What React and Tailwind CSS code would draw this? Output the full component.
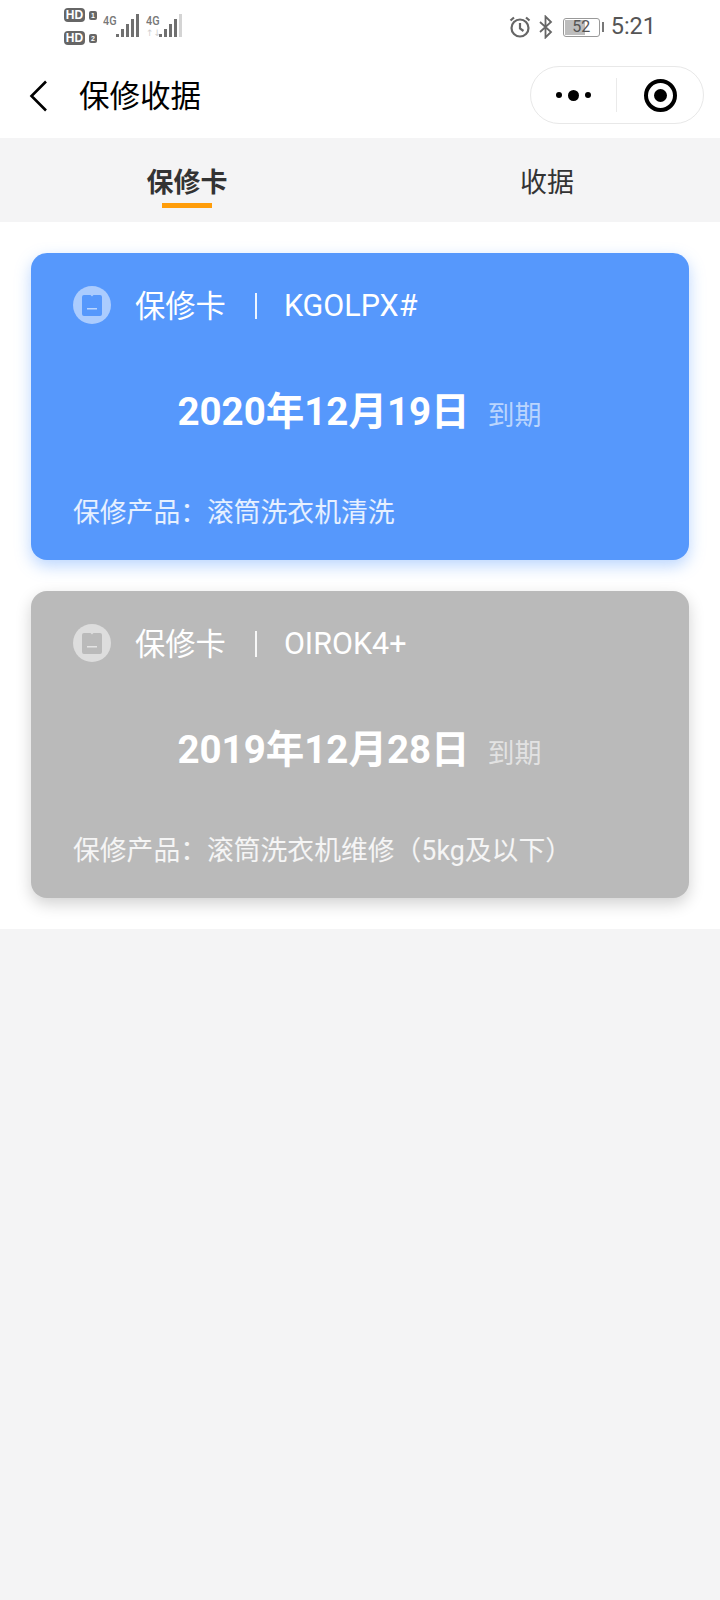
import React from 'react';

const cjk = "font-['Roboto','Noto_Sans_CJK_SC',sans-serif]";

const cards = [
  { code: 'KGOLPX#', date: '2020年12月19日', product: '滚筒洗衣机清洗', bg: 'bg-[#5698fc]', shadow: 'shadow-[0_6px_16px_rgba(86,152,252,0.4)]', icon: 'text-[#5698fc]' },
  { code: 'OIROK4+', date: '2019年12月28日', product: '滚筒洗衣机维修（5kg及以下）', bg: 'bg-[#bababa]', shadow: 'shadow-[0_6px_16px_rgba(0,0,0,0.18)]', icon: 'text-[#bababa]' },
];

function Signal({ dim }) {
  const heights = [3, 8, 13, 18, 23];
  return (
    <div className="flex items-end gap-[2px] h-[23px]">
      {heights.map((h, i) => (
        <div
          key={i}
          className={`w-[3px] ${dim && i === 4 ? 'bg-[#d4d4d4]' : 'bg-[#707070]'}`}
          style={{ height: h }}
        />
      ))}
    </div>
  );
}

function HdBadge({ n }) {
  return (
    <div className="flex items-center gap-[4px]">
      <span className="bg-[#666] text-white rounded-[4px] w-[21px] h-[14px] flex items-center justify-center text-[12px] leading-none font-bold font-['Liberation_Sans',sans-serif]">HD</span>
      <span className="bg-[#666] text-white rounded-[2px] w-[8px] h-[9px] flex items-center justify-center text-[7px] leading-none font-bold font-['Liberation_Sans',sans-serif]">{n}</span>
    </div>
  );
}

function NetworkLabel({ arrows }) {
  return (
    <div className="relative w-[13px] h-[23px]">
      <span className="absolute left-0 top-[1px] text-[12px] leading-none font-medium text-[#777] font-['Roboto',sans-serif] scale-x-90 origin-left">4G</span>
      {arrows && (
        <span className="absolute left-0 bottom-[-1px] text-[9px] leading-none text-[#cfcfcf] font-['DejaVu_Sans',sans-serif]">↑↓</span>
      )}
    </div>
  );
}

function StatusBar() {
  return (
    <div className="h-[54px] flex justify-between pl-[64px] pr-[64px] text-[#555]">
      <div className="flex items-start pt-[8px]">
        <div className="flex flex-col gap-[9px]">
          <HdBadge n="1" />
          <HdBadge n="2" />
        </div>
        <div className="flex items-start ml-[6px] mt-[6px]">
          <NetworkLabel />
          <Signal />
          <div className="ml-[7px] flex items-start">
            <NetworkLabel arrows />
            <Signal dim />
          </div>
        </div>
      </div>
      <div className="flex items-center h-[54px]">
        <svg width="24" height="24" viewBox="0 0 24 24" fill="none" stroke="#666" strokeWidth="2.2">
          <circle cx="12" cy="13" r="8.5" />
          <path d="M12 8v5.5l3.5 2.5M2.5 5.5 6 2.5M21.5 5.5 18 2.5" />
        </svg>
        <svg className="ml-[6px]" width="16" height="24" viewBox="0 0 16 24" fill="none" stroke="#666" strokeWidth="1.8">
          <path d="M2 7l11 10-5.5 5.5V1.5L13 7 2 17" />
        </svg>
        <div className="flex items-center gap-[2px] ml-[9px]">
          <div className="relative w-[37px] h-[19px] border border-[#999] rounded-[3px] overflow-hidden flex items-center justify-center">
            <div className="absolute left-[1px] top-[1px] bottom-[1px] w-[20px] bg-[#bdbdbd]" />
            <span className="relative text-[16px] leading-none text-[#555] font-['Roboto',sans-serif]">52</span>
          </div>
          <div className="w-[2px] h-[10px] bg-[#777]" />
        </div>
        <span className="ml-[7px] text-[23.5px] leading-none text-[#555] font-['Roboto',sans-serif]">5:21</span>
      </div>
    </div>
  );
}

function NavBar() {
  return (
    <div className="h-[84px] flex items-center pl-[29px] pr-[16px]">
      <svg width="18" height="32" viewBox="0 0 18 32" fill="none" stroke="#000" strokeWidth="2.6">
        <path d="M17 1.5 2.5 16 17 30.5" />
      </svg>
      <span className={`ml-[32px] mt-[2px] text-[30.5px] leading-none text-black ${cjk}`}>保修收据</span>
      <div className="ml-auto w-[174px] h-[58px] rounded-full border border-[#e8e8e8] bg-white flex items-center mb-[2px]">
        <div className="w-[85px] flex items-center justify-center gap-[6px]">
          <div className="w-[6px] h-[6px] rounded-full bg-black" />
          <div className="w-[11px] h-[11px] rounded-full bg-black" />
          <div className="w-[6px] h-[6px] rounded-full bg-black" />
        </div>
        <div className="w-px h-[34px] bg-[#eaeaea]" />
        <div className="flex-1 flex items-center justify-center">
          <div className="w-[33px] h-[33px] rounded-full border-[4px] border-black flex items-center justify-center">
            <div className="w-[13px] h-[13px] rounded-full bg-black" />
          </div>
        </div>
      </div>
    </div>
  );
}

function Tabs() {
  return (
    <div className={`h-[84px] bg-[#f4f4f5] pl-[14px] grid grid-cols-[346px_346px] gap-[14px] ${cjk}`}>
      <div className="flex flex-col items-center pt-[29px]">
        <span className="text-[27px] leading-[32px] font-bold text-[#333]">保修卡</span>
        <div className="w-[50px] h-[5px] bg-[#ff9d0a] mt-[4px]" />
      </div>
      <div className="flex flex-col items-center pt-[29px]">
        <span className="text-[27px] leading-[32px] text-[#333]">收据</span>
      </div>
    </div>
  );
}

function WarrantyCard({ card }) {
  return (
    <div className={`h-[307px] rounded-[16px] text-white pl-[42px] pr-[43px] flex flex-col ${card.bg} ${card.shadow} ${cjk}`}>
      <div className="flex items-center mt-[32px] h-[40px]">
        <div className="w-[38px] h-[38px] rounded-full bg-white/50 flex items-center justify-center">
          <svg width="20" height="21" viewBox="0 0 20 21" className={card.icon} fill="currentColor">
            <path d="M2 0h6.5l1.5 1.5L11.5 0H18a2 2 0 0 1 2 2v17a2 2 0 0 1-2 2H2a2 2 0 0 1-2-2V2a2 2 0 0 1 2-2z" />
            <rect x="5" y="13" width="10" height="1.5" fill="#fff" opacity="0.6" />
          </svg>
        </div>
        <span className="ml-[24px] mt-[4px] text-[30.3px] leading-none">保修卡</span>
        <div className="w-[2px] h-[26px] bg-white/90 ml-[29px] mt-[2px]" />
        <span className="ml-[27px] mt-[2px] text-[30.5px] leading-none">{card.code}</span>
      </div>
      <div className="flex items-baseline justify-center mt-[63px]">
        <span className="text-[38.5px] leading-[48px] font-bold">{card.date}</span>
        <span className="ml-[18px] text-[27px] leading-none text-white/60">到期</span>
      </div>
      <div className="mt-[59px] text-[26.8px] leading-[36px] text-white/85">保修产品：{card.product}</div>
    </div>
  );
}

export default function App() {
  return (
    <div className="min-h-[1600px] bg-[#f4f4f5]">
      <div className="bg-white">
        <StatusBar />
        <NavBar />
      </div>
      <Tabs />
      <div className="bg-white px-[31px] pt-[31px] pb-[31px] flex flex-col gap-[31px]">
        {cards.map((card) => (
          <WarrantyCard key={card.code} card={card} />
        ))}
      </div>
    </div>
  );
}
